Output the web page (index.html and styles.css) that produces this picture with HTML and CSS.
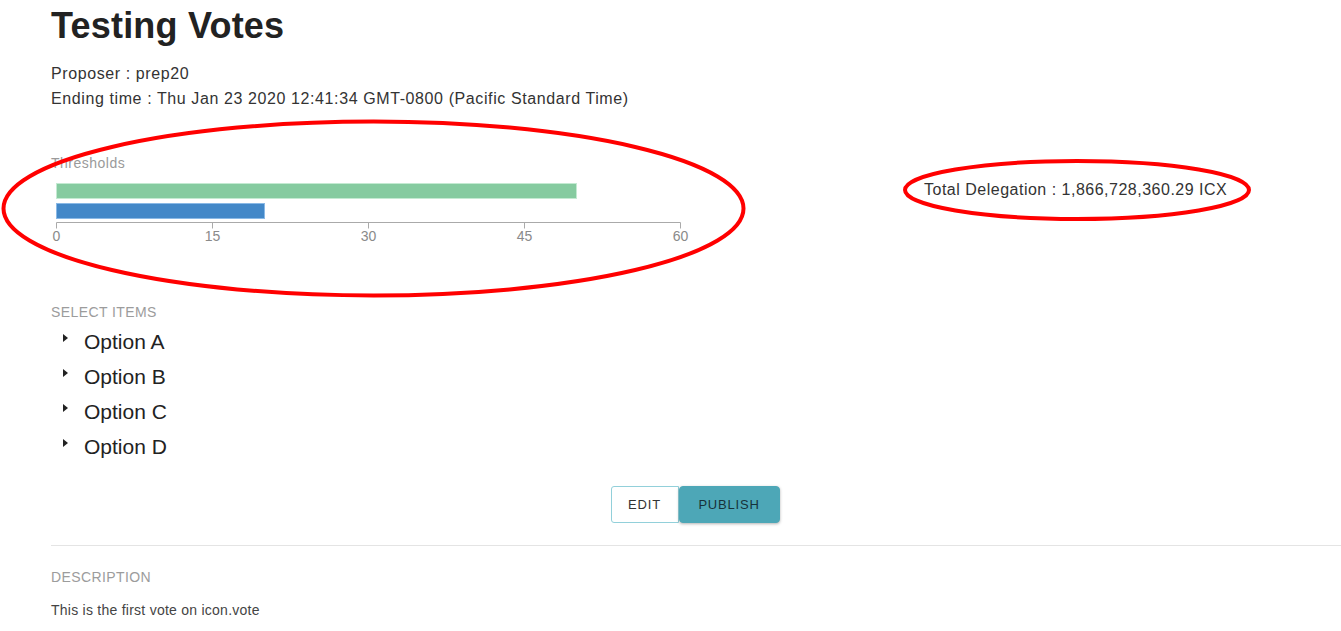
FILE: index.html
```html
<!DOCTYPE html>
<html lang="en">
<head>
<meta charset="utf-8">
<title>Testing Votes</title>
<link rel="stylesheet" href="styles.css">
</head>
<body>
<main class="page">
  <h1 class="title">Testing Votes</h1>
  <p class="meta">Proposer : prep20</p>
  <p class="meta">Ending time : Thu Jan 23 2020 12:41:34 GMT-0800 (Pacific Standard Time)</p>

  <section class="stats">
    <div class="chart">
      <div class="chart-label">Thresholds</div>
      <svg class="chart-svg" width="650" height="74" viewBox="0 0 650 74">
        <rect x="5.5" y="10.5" width="520" height="15" fill="#86cba0" stroke="#c4ead2" stroke-width="1"/>
        <rect x="5.5" y="30.5" width="208" height="15" fill="#4388c8" stroke="#8ab9e6" stroke-width="1"/>
        <path d="M5.5 55.5V49.5H629.5V55.5M161.5 49.5V55.5M317.5 49.5V55.5M473.5 49.5V55.5" fill="none" stroke="#aaa" stroke-width="1"/>
        <g class="ticks" fill="#8a8a8a" font-size="14" text-anchor="middle">
          <text x="5.5" y="68">0</text>
          <text x="161.5" y="68">15</text>
          <text x="317.5" y="68">30</text>
          <text x="473.5" y="68">45</text>
          <text x="629.5" y="68">60</text>
        </g>
      </svg>
    </div>
    <div class="delegation">Total Delegation : 1,866,728,360.29 ICX</div>
  </section>

  <section class="items">
    <div class="section-label">SELECT ITEMS</div>
    <ul class="options">
      <li class="option"><span class="caret"></span>Option A</li>
      <li class="option"><span class="caret"></span>Option B</li>
      <li class="option"><span class="caret"></span>Option C</li>
      <li class="option"><span class="caret"></span>Option D</li>
    </ul>
  </section>

  <div class="actions">
    <button class="btn btn-edit">EDIT</button>
    <button class="btn btn-publish">PUBLISH</button>
  </div>

  <hr class="divider">

  <section class="description">
    <div class="section-label">DESCRIPTION</div>
    <p class="desc-text">This is the first vote on icon.vote</p>
  </section>

  <svg class="annotations" width="1341" height="631" viewBox="0 0 1341 631">
    <ellipse cx="373.5" cy="208.5" rx="370" ry="87" fill="none" stroke="#ff0000" stroke-width="4"/>
    <ellipse cx="1077" cy="190" rx="172" ry="29" fill="none" stroke="#ff0000" stroke-width="4"/>
  </svg>
</main>
</body>
</html>
```

FILE: styles.css
```css
* { box-sizing: border-box; }
html, body { margin: 0; padding: 0; background: #fff; }
body {
  font-family: "Liberation Sans", Arial, Helvetica, sans-serif;
  color: #333;
  width: 1341px;
  height: 631px;
  overflow: hidden;
}
.page {
  position: relative;
  padding: 6px 0 0 51px;
  height: 631px;
}
.title {
  margin: 0;
  font-size: 36px;
  line-height: 40px;
  letter-spacing: 0.2px;
  font-weight: 700;
  color: #222;
}
.meta {
  margin: 0;
  font-size: 16px;
  line-height: 25px;
  letter-spacing: 0.6px;
  color: #333;
}
.meta:first-of-type { margin-top: 15px; }

.stats {
  display: flex;
  margin-top: 44px;
}
.chart { width: 873px; }
.chart-label {
  font-size: 14px;
  line-height: 16px;
  letter-spacing: 0.5px;
  color: #9a9a9a;
}
.chart-svg { display: block; margin-top: 2px; font-family: "Liberation Sans", Arial, sans-serif; }
.delegation {
  font-size: 16px;
  line-height: 20px;
  letter-spacing: 0.5px;
  color: #333;
  padding-top: 25px;
}

.items { margin-top: 57px; }
.section-label {
  font-size: 14px;
  line-height: 16px;
  letter-spacing: 0.4px;
  color: #9c9c9c;
}
.options {
  list-style: none;
  margin: 4px 0 0 0;
  padding: 0 0 0 12px;
}
.option {
  display: flex;
  align-items: center;
  height: 35px;
  font-size: 21px;
  color: #222;
}
.caret {
  width: 0;
  height: 0;
  border-top: 4px solid transparent;
  border-bottom: 4px solid transparent;
  border-left: 5px solid #222;
  margin-right: 16px;
  margin-top: -8px;
}

.actions {
  display: flex;
  justify-content: center;
  width: 1339px;
  margin-left: -51px;
  margin-top: 22px;
  padding-left: 51px;
}
.btn {
  font-family: "Liberation Sans", Arial, sans-serif;
  font-size: 13px;
  letter-spacing: 0.8px;
  height: 37px;
  margin: 0;
  cursor: pointer;
}
.btn-edit {
  width: 68px;
  background: #fff;
  color: #333;
  border: 1px solid #92d0da;
  border-radius: 3px 0 0 3px;
}
.btn-publish {
  width: 101px;
  background: #4da7b7;
  color: #17323a;
  border: 1px solid #4da7b7;
  border-radius: 4px;
  box-shadow: 0 1px 3px rgba(0,0,0,0.3);
}

.divider {
  border: 0;
  border-top: 1px solid #e4e4e4;
  margin: 22px 0 0 0;
}
.description { margin-top: 23px; }
.desc-text {
  margin: 17px 0 0 0;
  font-size: 14px;
  line-height: 16px;
  letter-spacing: 0.25px;
  color: #444;
}

.annotations {
  position: absolute;
  left: 0;
  top: 0;
  pointer-events: none;
}
```
